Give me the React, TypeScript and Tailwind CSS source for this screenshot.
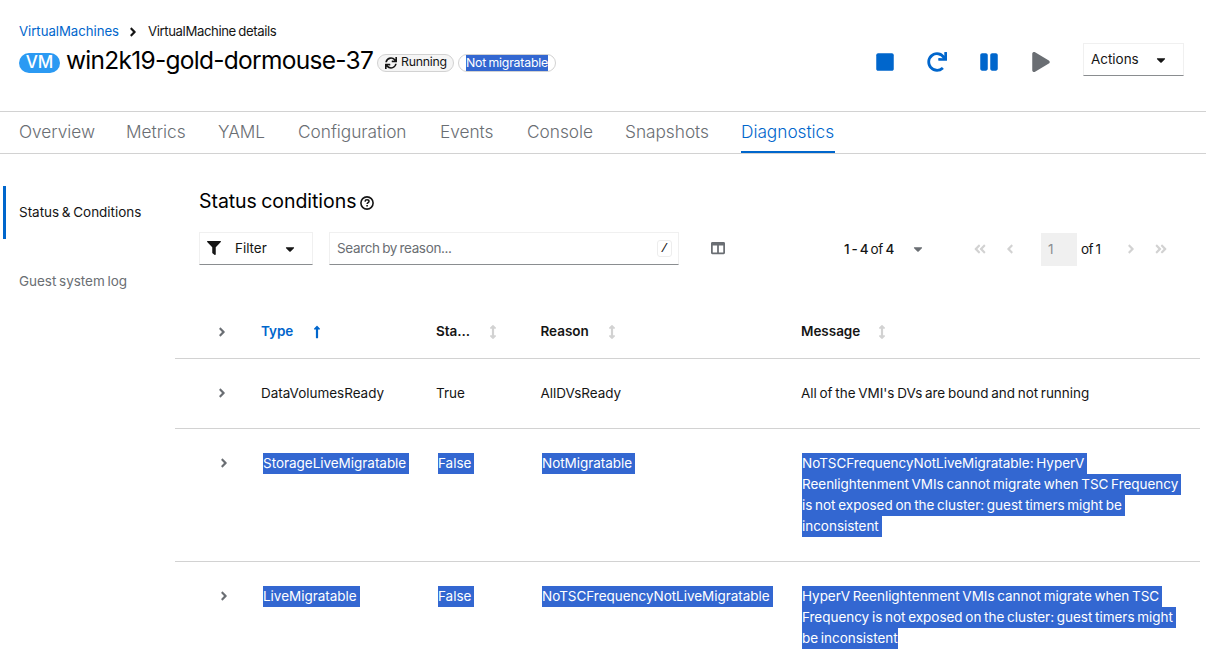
import { useState } from "react";
import type { ReactNode } from "react";
import {
  FaAngleDoubleLeft,
  FaAngleDoubleRight,
  FaAngleLeft,
  FaAngleRight,
  FaArrowsAltV,
  FaCaretDown,
  FaColumns,
  FaFilter,
  FaLongArrowAltUp,
  FaPause,
  FaPlay,
  FaRedo,
  FaStop,
  FaSync,
} from "react-icons/fa";

const tabs = [
  { name: "Overview", width: "w-[75px]" },
  { name: "Metrics", width: "w-[60px]" },
  { name: "YAML", width: "w-[48px]" },
  { name: "Configuration", width: "w-[110px]" },
  { name: "Events", width: "w-[55px]" },
  { name: "Console", width: "w-[66px]" },
  { name: "Snapshots", width: "w-[84px]" },
  { name: "Diagnostics", width: "w-[94px]" },
];

type Condition = {
  type: string;
  status: string;
  reason: string;
  message: string[];
  selected?: boolean;
};

const conditions: Condition[] = [
  {
    type: "DataVolumesReady",
    status: "True",
    reason: "AllDVsReady",
    message: ["All of the VMI's DVs are bound and not running"],
  },
  {
    type: "StorageLiveMigratable",
    status: "False",
    reason: "NotMigratable",
    message: [
      "NoTSCFrequencyNotLiveMigratable: HyperV",
      "Reenlightenment VMIs cannot migrate when TSC Frequency",
      "is not exposed on the cluster: guest timers might be",
      "inconsistent",
    ],
    selected: true,
  },
  {
    type: "LiveMigratable",
    status: "False",
    reason: "NoTSCFrequencyNotLiveMigratable",
    message: [
      "HyperV Reenlightenment VMIs cannot migrate when TSC",
      "Frequency is not exposed on the cluster: guest timers might",
      "be inconsistent",
    ],
    selected: true,
  },
];

function HelpIcon() {
  return (
    <svg viewBox="0 0 14 14" className="w-3.5 h-3.5" fill="none" stroke="#151515">
      <circle cx="7" cy="7" r="6.1" strokeWidth="1.6" />
      <path d="M5 5.6C5.1 4.4 5.9 3.8 7 3.8c1.2 0 2 .7 2 1.6 0 1.3-1.8 1.3-1.9 2.6" strokeWidth="1.5" />
      <path d="M7.1 9v1.5" strokeWidth="1.6" />
    </svg>
  );
}

function Cell({ selected, last, children }: { selected?: boolean; last?: boolean; children: ReactNode }) {
  return (
    <div className="whitespace-nowrap leading-[21px]">
      <span className={selected ? `inline-block bg-[#3367d1] text-white ${last ? "" : "pr-[3px]"}` : ""}>
        {children}
      </span>
    </div>
  );
}

function SortHeader({ label, gap }: { label: string; gap: string }) {
  return (
    <div className={`flex items-center font-semibold ${gap}`}>
      <span>{label}</span>
      <FaArrowsAltV className="w-3.5 h-3.5 text-[#d2d2d2]" />
    </div>
  );
}

export default function App() {
  const [activeTab, setActiveTab] = useState("Diagnostics");

  return (
    <div className="w-[1207px] h-[667px] overflow-hidden bg-white font-['Inter',sans-serif] text-[13.5px] tracking-[-0.03px] [word-spacing:-1px] text-[#151515]">
      {/* Header */}
      <header className="flex h-[111px] justify-between pl-[19px] pr-[23px]">
        <div className="pt-[22px]">
          <nav className="flex items-center h-5 text-[13.2px]">
            <a className="text-[#0066cc]">VirtualMachines</a>
            <FaAngleRight className="ml-[7px] mr-[8px] w-3.5 h-3.5" />
            <span className="tracking-[-0.4px]">VirtualMachine details</span>
          </nav>
          <div className="flex items-center h-[38px]">
            <span className="flex items-center justify-center mt-[3px] w-[41px] h-5 rounded-full bg-[#2b9af3] text-white text-[17px] font-medium">
              VM
            </span>
            <h1 className="ml-[6px] mb-[2px] w-[306px] whitespace-nowrap text-[24.5px] tracking-[-0.72px] text-black">
              win2k19-gold-dormouse-37
            </h1>
            <span className="flex items-center mt-[3px] ml-[5px] w-[77px] h-[18px] rounded-full border border-[#d2d2d2] bg-[#f5f5f5] pl-[7px] gap-[4px] text-[12.3px] tracking-[-0.25px]">
              <FaSync className="w-3 h-3" />
              Running
            </span>
            <span className="flex items-center mt-[3px] ml-1 w-[98px] h-[18px] rounded-full border border-[#d2d2d2] pl-[7px] text-[12.3px]">
              <span className="w-[82px] h-4 leading-4 whitespace-nowrap bg-[#3367d1] text-white tracking-[-0.18px]">
                Not migratable
              </span>
            </span>
          </div>
        </div>

        <div className="flex items-start pt-[43px]">
          <div className="flex items-center h-[38px] gap-8 mr-[32px] text-[#0066cc]">
            <FaStop className="w-5 h-5" />
            <FaRedo className="w-5 h-5" />
            <FaPause className="w-5 h-5" />
            <FaPlay className="w-5 h-5 text-[#6a6e73]" />
          </div>
          <button className="flex items-center w-[101px] h-[33px] pl-[7px] pr-[15px] justify-between border border-[#f0f0f0] border-b-[#8a8d90]">
            Actions
            <FaCaretDown className="w-3.5 h-3.5" />
          </button>
        </div>
      </header>

      {/* Tabs */}
      <div className="flex w-[1206px] h-[43px] pl-[19px] gap-8 border-y border-[#d2d2d2]">
        {tabs.map((tab) => (
          <button
            key={tab.name}
            onClick={() => setActiveTab(tab.name)}
            className={`${tab.width} h-[41px] shrink-0 pt-px text-left whitespace-nowrap text-[17.3px] font-light border-b-2 ${
              activeTab === tab.name ? "border-[#0066cc] text-[#0066cc]" : "border-transparent text-[#6a6e73]"
            }`}
          >
            {tab.name}
          </button>
        ))}
      </div>

      <div className="flex">
        {/* Side navigation */}
        <aside className="w-[172px] shrink-0 ml-[3px] pt-8">
          <div className="flex items-center h-[53px] border-l-[3px] border-[#0066cc] pl-[13px]">Status &amp; Conditions</div>
          <div className="flex items-center h-[53px] mt-4 pl-4 text-[#6a6e73]">Guest system log</div>
        </aside>

        <main className="w-[1025px] pt-[34px]">
          <div className="flex items-center h-7 pl-6 gap-[4px]">
            <h2 className="w-[157px] text-[19.5px] tracking-[-0.05px] text-black whitespace-nowrap">Status conditions</h2>
            <span className="mt-px"><HelpIcon /></span>
          </div>

          {/* Toolbar */}
          <div className="flex items-center h-[33px] mt-4 pl-6">
            <button className="flex items-center w-[114px] h-[33px] pl-[7px] border border-[#f0f0f0] border-b-[#8a8d90]">
              <FaFilter className="mb-px w-3.5 h-3.5" />
              <span className="ml-[14px] w-[48px] text-left">Filter</span>
              <FaCaretDown className="w-3.5 h-3.5" />
            </button>
            <div className="flex items-center justify-between w-[350px] h-[33px] ml-4 pl-[7px] pr-[6px] border border-[#f0f0f0] border-b-[#8a8d90] text-[#6a6e73]">
              <span className="tracking-[-0.35px]">Search by reason...</span>
              <kbd className="flex items-center justify-center w-[15px] h-[17px] rounded-[3px] border border-[#ededed] font-['Liberation_Mono',monospace] text-[13px] text-[#151515]">
                /
              </kbd>
            </div>
            <FaColumns className="ml-8 mb-px w-3.5 h-3.5 text-[#6a6e73]" />
            <div className="ml-[119px] mt-[2px] w-[52px] whitespace-nowrap tracking-[-0.35px]">
              <span className="font-medium">1 - 4</span> of <span className="font-medium">4</span>
            </div>
            <FaCaretDown className="ml-[15px] w-3.5 h-3.5 text-[#6a6e73]" />
            <div className="flex items-center ml-[48px] mt-px text-[#d2d2d2]">
              <FaAngleDoubleLeft className="w-3.5 h-3.5" />
              <FaAngleLeft className="ml-4 w-3.5 h-3.5" />
              <span className="flex items-center ml-6 w-9 h-[33px] pl-[7px] bg-[#f0f0f0] text-[#8a8d90]">1</span>
              <span className="ml-[4px] w-[21px] whitespace-nowrap text-[#151515] tracking-[-0.5px]">of 1</span>
              <FaAngleRight className="ml-[22px] w-3.5 h-3.5" />
              <FaAngleDoubleRight className="ml-4 w-3.5 h-3.5" />
            </div>
          </div>

          {/* Conditions table */}
          <div className="grid grid-cols-[86px_175px_104.5px_260.5px_1fr] items-center h-[54px] mt-[40px] border-b border-[#d2d2d2]">
            <FaAngleRight className="ml-[40px] w-3.5 h-3.5 text-[#6a6e73]" />
            <div className="flex items-center gap-[17px] font-semibold text-[#0066cc]">
              Type
              <FaLongArrowAltUp className="w-3.5 h-3.5" />
            </div>
            <SortHeader label="Sta..." gap="gap-[16px]" />
            <SortHeader label="Reason" gap="gap-[16px]" />
            <SortHeader label="Message" gap="gap-[15px]" />
          </div>
          {conditions.map((row) => (
            <div
              key={row.type}
              className={`grid items-start py-6 border-b border-[#d2d2d2] ${
                row.selected
                  ? "pl-[2px] grid-cols-[86px_175px_104px_260px_1fr]"
                  : "grid-cols-[86px_175px_104.5px_260.5px_1fr]"
              }`}
            >
              <FaAngleRight className="ml-[40px] mt-[3px] w-3.5 h-3.5 text-[#6a6e73]" />
              <Cell selected={row.selected}>{row.type}</Cell>
              <Cell selected={row.selected}>{row.status}</Cell>
              <Cell selected={row.selected}>{row.reason}</Cell>
              <div>
                {row.message.map((line) => (
                  <Cell key={line} selected={row.selected} last={line === "be inconsistent"}>
                    {line}
                  </Cell>
                ))}
              </div>
            </div>
          ))}
        </main>
      </div>
    </div>
  );
}
